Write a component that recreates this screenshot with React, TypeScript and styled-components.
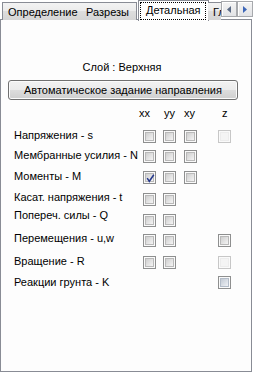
import styled, { createGlobalStyle, css } from "styled-components";

const GlobalStyle = createGlobalStyle`
  html, body {
    margin: 0;
    padding: 0;
    background: #ffffff;
  }
  body {
    font-family: "Liberation Sans", Arial, sans-serif;
    font-size: 11px;
    color: #000;
  }
`;

const Page = styled.div`
  width: 254px;
  height: 375px;
  display: flex;
  flex-direction: column;
`;

const TabStrip = styled.div`
  display: flex;
  align-items: flex-start;
  height: 20px;
  width: 254px;
  margin-bottom: -1px;
  position: relative;
  z-index: 1;
`;

const TabList = styled.div`
  display: flex;
  align-items: flex-end;
  height: 21px;
  width: 221px;
  padding-left: 2px;
  box-sizing: border-box;
  overflow: hidden;
`;

const Tab = styled.div<{ $w: number; $gap?: number }>`
  flex: none;
  width: ${({ $w }) => $w}px;
  height: 18px;
  margin-left: ${({ $gap }) => $gap ?? 0}px;
  margin-bottom: 1px;
  box-sizing: border-box;
  border: 1px solid #898c95;
  border-bottom: none;
  border-left-width: ${({ $gap }) => ($gap === -1 ? 0 : 1)}px;
  padding: 1px 0 0 5px;
  line-height: 16px;
  white-space: nowrap;
  background: linear-gradient(to bottom, #f3f3f3 0%, #ebebeb 50%, #dddddd 50%, #d5d5d5 100%);
`;

const ActiveTab = styled.div`
  flex: none;
  width: 71px;
  height: 21px;
  margin-left: 1px;
  box-sizing: border-box;
  border: 1px solid #898c95;
  border-bottom: none;
  padding: 1px 0 0 1px;
  background: #ffffff;
  white-space: nowrap;
`;

const FocusRect = styled.span`
  display: inline-block;
  border: 1px dotted #000;
  padding: 0 4px 2px 5px;
  line-height: 14px;
`;

const Scroller = styled.div`
  display: flex;
  margin-top: 1px;
`;

const ScrollButton = styled.div`
  width: 16px;
  height: 16px;
  box-sizing: border-box;
  border: 1px solid #a7a9ad;
  box-shadow: inset 1px 1px 0 #ffffff;
  background: linear-gradient(to bottom, #f4f4f4, #e2e3e6);
  display: flex;
  align-items: center;
  justify-content: center;
`;

const Panel = styled.div`
  width: 252px;
  height: 353px;
  box-sizing: border-box;
  border: 1px solid #898c95;
  background: #fdfdfd;
  padding: 41px 13px 0 7px;
  display: flex;
  flex-direction: column;
`;

const LayerCaption = styled.div`
  line-height: 13px;
  text-align: center;
  padding-right: 2px;
`;

const AutoButton = styled.button`
  margin-top: 6px;
  width: 230px;
  height: 20px;
  box-sizing: border-box;
  border: 1px solid #707070;
  border-radius: 3px;
  box-shadow: inset 0 0 0 1px #fbfbfb;
  background: linear-gradient(to bottom, #f2f2f2 0%, #ebebeb 50%, #dddddd 50%, #cfcfcf 100%);
  font-family: "Liberation Sans", Arial, sans-serif;
  font-size: 11px;
  color: #000;
  padding: 0;
  line-height: 16px;
`;

const Grid = styled.div`
  margin-top: 7px;
  margin-left: 6px;
  display: flex;
  flex-direction: column;
`;

const Row = styled.div<{ $h: number }>`
  display: flex;
  align-items: flex-start;
  height: ${({ $h }) => $h}px;
`;

const Label = styled.div`
  width: 129px;
  flex: none;
  line-height: 13px;
  white-space: nowrap;
`;

const Cells = styled.div<{ $dy: number }>`
  display: flex;
  margin-top: ${({ $dy }) => $dy}px;
`;

const Cell = styled.div<{ $w: number }>`
  flex: none;
  width: ${({ $w }) => $w}px;
`;

const HeadText = styled.div<{ $dx: number }>`
  margin-left: ${({ $dx }) => $dx}px;
  line-height: 13px;
`;

type BoxState = "n" | "d" | "h" | "c";

const Box = styled.div<{ $state: BoxState }>`
  width: 13px;
  height: 13px;
  box-sizing: border-box;
  border: 1px solid ${({ $state }) => ($state === "d" ? "#c7c7c7" : "#8e8f8f")};
  padding: 1px;
  background: #fafafa;
  position: relative;

  &::after {
    content: "";
    display: block;
    width: 9px;
    height: 9px;
    box-sizing: border-box;
    ${({ $state }) =>
      $state === "d"
        ? css`
            border: 1px solid #ececec;
            background: #f4f4f4;
          `
        : $state === "h"
        ? css`
            border: 1px solid #b3bcc8;
            background: linear-gradient(135deg, #c3cad4, #eef1f5);
          `
        : css`
            border: 1px solid #b9b9b9;
            background: linear-gradient(135deg, #cfcfcf, #f4f4f4);
          `}
  }

  svg {
    position: absolute;
    left: 0;
    top: 0;
  }
`;

const colWidths = [20, 21, 34, 13];

const heads = [
  { t: "xx", dx: -4 },
  { t: "yy", dx: 1 },
  { t: "xy", dx: 0 },
  { t: "z", dx: 4 },
];

type RowData = {
  label: string;
  h: number;
  dy: number;
  boxes: (BoxState | null)[];
};

const rows: RowData[] = [
  { label: "Напряжения - s", h: 20, dy: 1, boxes: ["n", "n", "n", "d"] },
  { label: "Мембранные усилия - N", h: 21, dy: 1, boxes: ["n", "n", "n", null] },
  { label: "Моменты - M", h: 21, dy: 1, boxes: ["c", "n", "n", null] },
  { label: "Касат. напряжения - t", h: 18, dy: 2, boxes: ["n", "n", null, null] },
  { label: "Попереч. силы - Q", h: 23, dy: 5, boxes: ["n", "n", null, null] },
  { label: "Перемещения - u,w", h: 23, dy: 2, boxes: ["n", "n", null, "n"] },
  { label: "Вращение - R", h: 21, dy: 1, boxes: ["n", "n", null, "d"] },
  { label: "Реакции грунта - K", h: 13, dy: 0, boxes: [null, null, null, "h"] },
];

function CheckBox({ state }: { state: BoxState }) {
  return (
    <Box $state={state}>
      {state === "c" && (
        <svg width="13" height="13" viewBox="0 0 13 13">
          <path d="M3.2 6.2 L5.3 9.3 L9.8 2.8" fill="none" stroke="#26398c" strokeWidth="1.5" />
        </svg>
      )}
    </Box>
  );
}

export default function App() {
  return (
    <>
      <GlobalStyle />
      <Page>
        <TabStrip>
          <TabList>
            <Tab $w={80}>Определение</Tab>
            <Tab $w={56} $gap={-1}>Разрезы</Tab>
            <ActiveTab>
              <FocusRect>Детальная</FocusRect>
            </ActiveTab>
            <Tab $w={60} $gap={-1}>Главные</Tab>
          </TabList>
          <Scroller>
            <ScrollButton>
              <svg width="4" height="7" viewBox="0 0 4 7">
                <path d="M4 0 L0 3.5 L4 7 Z" fill="#5b6b86" />
              </svg>
            </ScrollButton>
            <ScrollButton>
              <svg width="4" height="7" viewBox="0 0 4 7">
                <path d="M0 0 L4 3.5 L0 7 Z" fill="#3d66b8" />
              </svg>
            </ScrollButton>
          </Scroller>
        </TabStrip>
        <Panel>
          <LayerCaption>Слой : Верхняя</LayerCaption>
          <AutoButton>Автоматическое задание направления</AutoButton>
          <Grid>
            <Row $h={22}>
              <Label />
              <Cells $dy={0}>
                {heads.map((hd, i) => (
                  <Cell key={hd.t} $w={colWidths[i]}>
                    <HeadText $dx={hd.dx}>{hd.t}</HeadText>
                  </Cell>
                ))}
              </Cells>
            </Row>
            {rows.map((r) => (
              <Row key={r.label} $h={r.h}>
                <Label>{r.label}</Label>
                <Cells $dy={r.dy}>
                  {r.boxes.map((b, i) => (
                    <Cell key={i} $w={colWidths[i]}>
                      {b && <CheckBox state={b} />}
                    </Cell>
                  ))}
                </Cells>
              </Row>
            ))}
          </Grid>
        </Panel>
      </Page>
    </>
  );
}
